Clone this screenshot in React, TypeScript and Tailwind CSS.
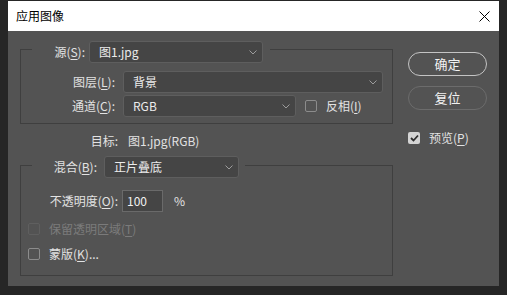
import type { ReactNode } from "react";

const font = { fontFamily: '"Noto Sans CJK SC", "Noto Sans", sans-serif' };

const Mn = ({ children }: { children: ReactNode }) => (
  <u className="underline underline-offset-[2px] decoration-[1px]">{children}</u>
);

const Chevron = () => (
  <svg width="8" height="5" viewBox="0 0 8 5" className="flex-none">
    <path d="M0.5 0.5 L4 4 L7.5 0.5" fill="none" stroke="#9c9c9c" strokeWidth="1" />
  </svg>
);

const Select = ({ text, className }: { text: string; className: string }) => (
  <div
    className={`flex items-center justify-between h-[22px] rounded-[3px] border border-[#5e5e5e] bg-[#454545] pl-[9px] pr-[5px] text-[12px] leading-[16px] text-[#ececec] ${className}`}
  >
    <span>{text}</span>
    <Chevron />
  </div>
);

const Checkbox = ({ checked, disabled }: { checked?: boolean; disabled?: boolean }) =>
  checked ? (
    <span className="flex-none flex items-center justify-center w-[12px] h-[12px] rounded-[2px] bg-[#d4d4d4]">
      <svg width="9" height="8" viewBox="0 0 9 8">
        <path d="M1 4 L3.5 6.5 L8 1.5" fill="none" stroke="#2e2e2e" strokeWidth="1.8" />
      </svg>
    </span>
  ) : (
    <span
      className={`flex-none block w-[12px] h-[12px] rounded-[2px] border ${
        disabled ? "border-[#5f5f5f]" : "border-[#8c8c8c]"
      }`}
    />
  );

export default function App() {
  return (
    <div className="w-[507px] h-[295px] bg-[#262626] pt-[1px] px-[8px] flex flex-col" style={font}>
      {/* title bar */}
      <div className="h-[30px] bg-white flex items-center justify-between pl-[8px] pr-[9px]">
        <span className="text-[12px] leading-[16px] text-black">应用图像</span>
        <svg width="11" height="11" viewBox="0 0 11 11">
          <path d="M0.5 0.5 L10.5 10.5 M10.5 0.5 L0.5 10.5" stroke="#000" strokeWidth="1" />
        </svg>
      </div>

      {/* body */}
      <div className="h-[255px] bg-[#535353] flex pl-[12px] pt-[4px] text-[12px] leading-[16px] text-[#e2e2e2]">
        <div className="w-[373px] flex flex-col">
          <fieldset className="border border-[#3f3f3f] pb-[6px]">
            <legend className="ml-[11px] pt-[6px] pr-[7px]">
              <div className="flex items-center">
                <span className="w-[53px] text-right">
                  源(<Mn>S</Mn>):
                </span>
                <Select text="图1.jpg" className="ml-[4px] w-[174px]" />
              </div>
            </legend>
            <div className="mt-[8px] flex items-center">
              <span className="w-[94px] text-right">
                图层(<Mn>L</Mn>):
              </span>
              <Select text="背景" className="ml-[8px] w-[260px]" />
            </div>
            <div className="mt-[2px] flex items-center">
              <span className="w-[94px] text-right">
                通道(<Mn>C</Mn>):
              </span>
              <Select text="RGB" className="ml-[8px] w-[173px]" />
              <div className="ml-[9px] flex items-center">
                <Checkbox />
                <span className="ml-[9px]">
                  反相(<Mn>I</Mn>)
                </span>
              </div>
            </div>
          </fieldset>

          <div className="mt-[9px] flex">
            <span className="w-[98px] text-right">目标:</span>
            <span className="ml-[10px]">图1.jpg(RGB)</span>
          </div>

          <fieldset className="mt-[3px] border border-[#3f3f3f] pb-[13px]">
            <legend className="ml-[11px] pt-[4px] pr-[6px]">
              <div className="flex items-center">
                <span className="w-[65px] text-right">
                  混合(<Mn>B</Mn>):
                </span>
                <Select text="正片叠底" className="ml-[7px] w-[135px]" />
              </div>
            </legend>
            <div className="mt-[12px] flex items-center">
              <span className="w-[97px] text-right">
                不透明度(<Mn>O</Mn>):
              </span>
              <div className="ml-[4px] w-[41px] h-[22px] flex items-center border border-[#6a6a6a] bg-[#454545] pl-[4px] text-[#f2f2f2]">
                100
              </div>
              <span className="ml-[11px]">%</span>
            </div>
            <div className="mt-[9px] h-[16px] flex items-center pl-[7px] text-[#7b7b7b]">
              <Checkbox disabled />
              <span className="ml-[9px]">
                保留透明区域(<Mn>T</Mn>)
              </span>
            </div>
            <div className="mt-[9px] h-[16px] flex items-center pl-[7px]">
              <Checkbox />
              <span className="ml-[9px]">
                蒙版(<Mn>K</Mn>)...
              </span>
            </div>
          </fieldset>
        </div>

        {/* buttons */}
        <div className="ml-[15px] w-[79px] flex flex-col mt-[17px]">
          <button className="h-[24px] rounded-full border-[1.5px] border-[#c4c4c4] text-[13px] text-[#f2f2f2]">
            确定
          </button>
          <button className="mt-[10px] h-[24px] rounded-full border-[1.5px] border-[#6c6c6c] text-[13px] text-[#f2f2f2]">
            复位
          </button>
          <div className="mt-[20px] flex items-center">
            <Checkbox checked />
            <span className="ml-[9px]">
              预览(<Mn>P</Mn>)
            </span>
          </div>
        </div>
      </div>
    </div>
  );
}
